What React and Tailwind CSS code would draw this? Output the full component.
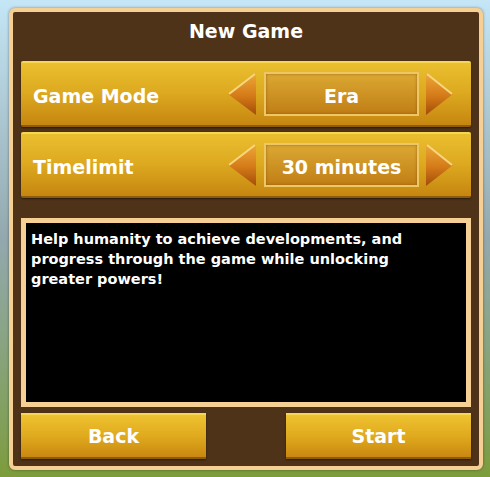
import React from "react";

const font = { fontFamily: '"DejaVu Sans", Verdana, sans-serif' };

function Arrow({ dir, id }) {
  const pts = dir === "left" ? "2,22 30,1 30,43" : "28,22 1,1 1,43";
  return (
    <svg width="31" height="44" viewBox="0 0 31 44" className="shrink-0">
      <defs>
        <linearGradient id={id} x1="0" y1="0" x2="0" y2="1">
          <stop offset="0" stopColor="#eea838" />
          <stop offset="0.55" stopColor="#d47a18" />
          <stop offset="1" stopColor="#a24c0a" />
        </linearGradient>
      </defs>
      <polygon points={pts} fill={`url(#${id})`} />
      {dir === "left" ? (
        <polyline points="3,22 29,2" fill="none" stroke="#f8d680" strokeWidth="2" />
      ) : (
        <polyline points="2,2 27,22" fill="none" stroke="#f8d680" strokeWidth="2" />
      )}
    </svg>
  );
}

function OptionRow({ label, value, id }) {
  return (
    <div className="h-[66px] flex items-center rounded-[2px] border-t-2 border-t-[#f6d652] border-b-2 border-b-[#8d5b0c] bg-gradient-to-b from-[#eabf2e] via-[#dca81f] to-[#c68610] shadow-[0_1px_2px_rgba(0,0,0,0.5)]">
      <span className="pl-3 pt-[4px] text-white font-bold text-[19px] flex-1">{label}</span>
      <div className="flex items-center pr-[15px]">
        <Arrow dir="left" id={`${id}-l`} />
        <div className="ml-[7px] mr-[6px] w-[155px] h-[44px] pt-[4px] flex items-center justify-center border-2 border-[#edc665] bg-gradient-to-b from-[#dba832] to-[#c07e14] shadow-[inset_0_0_3px_rgba(120,70,0,0.6)]">
          <span className="text-white font-bold text-[19px]">{value}</span>
        </div>
        <Arrow dir="right" id={`${id}-r`} />
      </div>
    </div>
  );
}

function GoldButton({ children }) {
  return (
    <button className="w-[185px] h-[46px] flex items-center justify-center border-t-2 border-t-[#f6d652] border-b-2 border-b-[#8d5b0c] bg-gradient-to-b from-[#eec230] via-[#e0aa1e] to-[#c98810] text-white font-bold text-[19px] shadow-[0_1px_2px_rgba(0,0,0,0.5)]">
      {children}
    </button>
  );
}

export default function App() {
  return (
    <div
      className="w-[490px] h-[477px] overflow-hidden pt-2 pl-[9px] bg-gradient-to-b from-[#c4e6f6] via-[#93a8ae] to-[#7d9c3a]"
      style={font}
    >
      <div className="w-[474px] h-[462px] border-4 border-[#f6cf94] rounded-md bg-[#4f3319] flex flex-col px-2 pb-[7px] shadow-[0_0_3px_rgba(0,0,0,0.4)]">
        <div className="h-[49px] pb-[10px] flex items-center justify-center">
          <h1 className="text-white font-bold text-[19px]">New Game</h1>
        </div>

        <div className="flex flex-col gap-[5px]">
          <OptionRow label="Game Mode" value="Era" id="mode" />
          <OptionRow label="Timelimit" value="30 minutes" id="time" />
        </div>

        <div className="mt-[20px] h-[189px] border-[5px] border-[#f6cf94] bg-black px-[5px] pt-[6px]">
          <p className="text-white font-bold text-[14.5px] leading-[20px]">
            Help humanity to achieve developments, and
            <br />
            progress through the game while unlocking
            <br />
            greater powers!
          </p>
        </div>

        <div className="mt-auto flex justify-between">
          <GoldButton>Back</GoldButton>
          <GoldButton>Start</GoldButton>
        </div>
      </div>
    </div>
  );
}
